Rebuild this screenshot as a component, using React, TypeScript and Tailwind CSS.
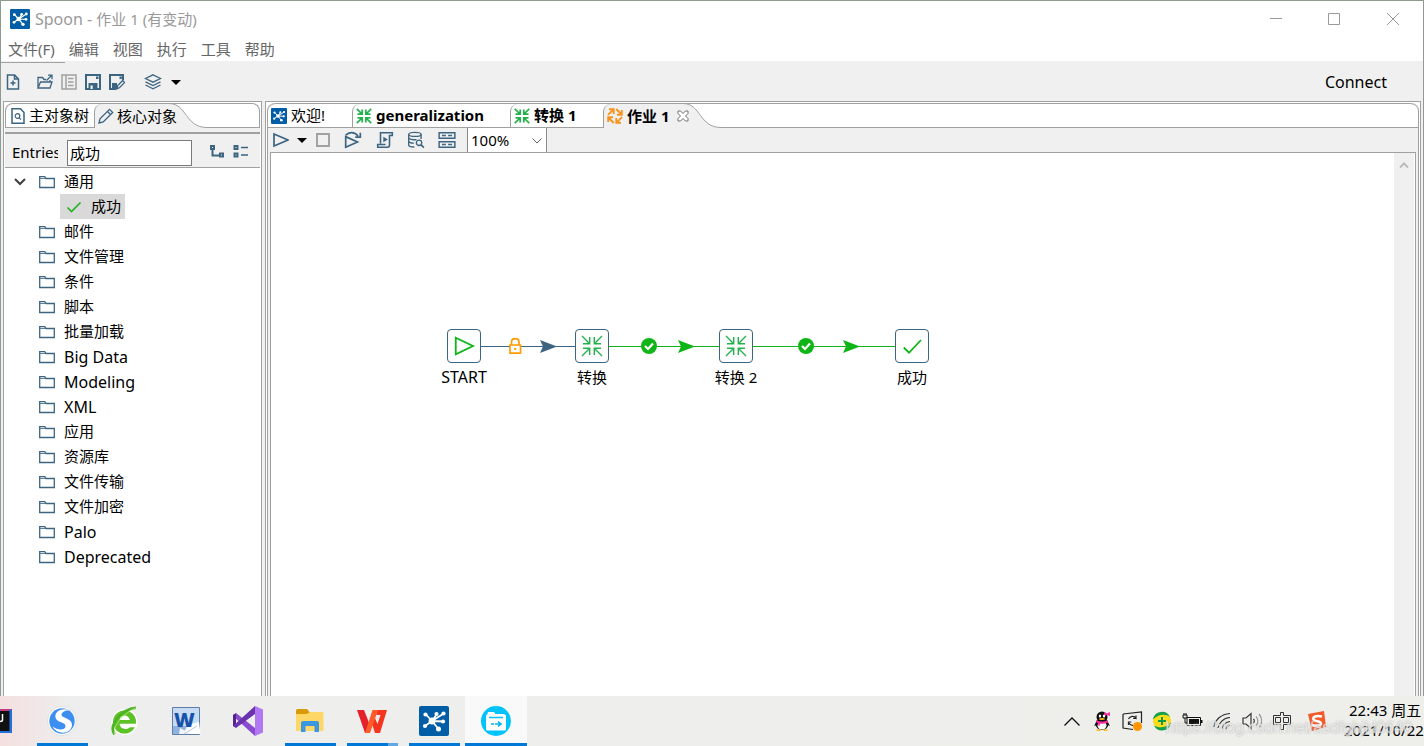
import React, { useState } from "react";
import { clsx } from "clsx";

const BLUE = "#3d6480";
const GREEN = "#0fb516";

type IconProps = { className?: string };

function SpoonLogo({ className }: IconProps) {
  return (
    <svg viewBox="0 0 30 30" className={className}>
      <rect width="30" height="30" rx="2" fill="#005da6" />
      <g stroke="#fff" strokeWidth="1.8">
        <path d="M13 15 6.500 8M13 15 18 8M13 15 24 8M13 15 24 15.500M13 15 6 20M13 15 19.500 23" />
      </g>
      <g fill="#fff">
        <circle cx="13" cy="15" r="3.400" />
        <circle cx="6.500" cy="8.500" r="2.100" />
        <circle cx="17.500" cy="8" r="2.100" />
        <circle cx="24.500" cy="7.500" r="2.100" />
        <circle cx="24" cy="15.500" r="2.100" />
        <circle cx="6" cy="20" r="2.100" />
        <circle cx="19.500" cy="23" r="2.500" />
      </g>
    </svg>
  );
}

function Icon({ children, className = "size-4", color = BLUE }: { children: React.ReactNode; className?: string; color?: string }) {
  return (
    <svg viewBox="0 0 16 16" fill="none" stroke={color} strokeWidth="1.5" className={clsx("shrink-0", className)}>
      {children}
    </svg>
  );
}

const FolderIcon = () => (
  <Icon className="h-4 w-[18px]">
    <path d="M.7 13.500V2.700h5l1.300 1.800h8.300v9z" strokeWidth="1.300" />
    <path d="M1 4.500h6" strokeWidth=".8" />
  </Icon>
);

const TransIcon = () => (
  <Icon color="#23b14d">
    <path
      d="M.8.8L6 6M15.200.8L10 6M.8 15.200L6 10M15.200 15.200L10 10M1.500 6.200h4.700V1.500M14.500 6.200H9.800V1.500M1.500 9.800h4.700v4.700M14.500 9.800H9.800v4.700"
      strokeWidth="1.700"
    />
  </Icon>
);

const JobIcon = () => (
  <Icon color="#f7941e">
    {[0, 90, 180, 270].map((angle) => (
      <path key={angle} d="M1 6.800L6 1.800M2 1.200h4.700V6" strokeWidth="1.900" transform={`rotate(${angle} 8 8)`} />
    ))}
  </Icon>
);

const Caret = () => (
  <svg viewBox="0 0 10 5" className="h-[5px] w-[10px]">
    <path d="M0 0h10L5 5z" />
  </svg>
);

function ToolButton({ label, className = "w-6", children }: { label: string; className?: string; children: React.ReactNode }) {
  return (
    <button type="button" aria-label={label} className={clsx("flex h-6 shrink-0 items-center justify-center", className)}>
      {children}
    </button>
  );
}

/* sloping right edge of the selected tab */
function TabCurve() {
  return (
    <svg viewBox="0 0 38 25" className="-mt-px h-[25px] w-[38px] shrink-0" fill="none">
      <path d="M0 .5C18 .5 16 24.500 38 24.500V25H0z" fill="#f0f0f0" />
      <path d="M0 .5h38" stroke="#a0a0a0" />
      <path d="M0 .5C18 .5 16 24.500 38 24.500" stroke="#a0a0a0" />
    </svg>
  );
}

const menus = ["文件(F)", "编辑", "视图", "执行", "工具", "帮助"];

const folders = [
  "邮件",
  "文件管理",
  "条件",
  "脚本",
  "批量加载",
  "Big Data",
  "Modeling",
  "XML",
  "应用",
  "资源库",
  "文件传输",
  "文件加密",
  "Palo",
  "Deprecated",
];

const isLatin = (text: string) => /^[\w ]+$/.test(text);

function TitleBar() {
  return (
    <header className="flex h-9 shrink-0 items-center pl-[9px] text-[#999]">
      <SpoonLogo className="size-5" />
      <h1 className="ml-[5px] flex-1 text-[15px]">
        <span className="text-base">Spoon - </span>作业 1 (有变动)
      </h1>
      <div className="flex">
        <button type="button" aria-label="最小化" className="flex w-[58px] justify-center">
          <svg viewBox="0 0 12 12" className="size-3" stroke="#999"><path d="M0 5.500h12" /></svg>
        </button>
        <button type="button" aria-label="最大化" className="flex w-[58px] justify-center">
          <svg viewBox="0 0 12 12" className="size-3" stroke="#999" fill="none"><path d="M.5.5h11v11H.5z" /></svg>
        </button>
        <button type="button" aria-label="关闭" className="flex w-[60px] justify-center">
          <svg viewBox="0 0 12 12" className="size-3" stroke="#999"><path d="M0 0l12 12M12 0L0 12" /></svg>
        </button>
      </div>
    </header>
  );
}

function MainToolbar() {
  return (
    <div className="flex h-[38px] shrink-0 items-center bg-[#f0f0f0]">
      <ToolButton label="新建">
        <Icon>
          <path d="M2.500 1h7.200L13.500 5v10h-11zM9.500 1v4h4M8 6.500v5M5.500 9h5" />
        </Icon>
      </ToolButton>
      <ToolButton label="打开" className="ml-2 w-6">
        <Icon>
          <path d="M1 14V3.500h4.500L7 5.500h2M1 14l2.500-6H15l-2 6zM13 8V6M9.500 6.500l5-5M11 1.200h4v4" strokeWidth="1.300" />
        </Icon>
      </ToolButton>
      <ToolButton label="浏览">
        <Icon color="#a0a0a0">
          <path d="M1 1h14v14H1zM5 1v14M7 4.500h5.500M7 8h5.500M7 11.500h5.500" />
        </Icon>
      </ToolButton>
      <ToolButton label="保存">
        <Icon>
          <path d="M1 1h14v14H1z" strokeWidth="2" />
          <path d="M3.500 9h9v6h-9zM11 2.500h2.500V5H11z" fill={BLUE} stroke="none" />
          <path d="M5.500 11.500h2.200V15H5.500z" fill="#f0f0f0" stroke="none" />
        </Icon>
      </ToolButton>
      <ToolButton label="另存为">
        <Icon>
          <path d="M7 15H1V1h13v5" strokeWidth="2" />
          <path d="M3 9h5v6H3zM10.500 2.500h2.300V5h-2.300z" fill={BLUE} stroke="none" />
          <path d="M8 14.800l.7-3.300 5-5 2 2-5 5z" fill="#f0f0f0" strokeWidth="1.300" />
        </Icon>
      </ToolButton>
      <ToolButton label="透视图" className="ml-3 w-6">
        <Icon className="h-4 w-[18px]">
          <path d="M8 .8l7.500 3.700L8 8.200.5 4.500zM.5 7.800L8 11.500l7.500-3.700M.5 11L8 14.800l7.500-3.800" strokeWidth="1.300" />
        </Icon>
      </ToolButton>
      <ToolButton label="选择透视图" className="w-[22px]">
        <Caret />
      </ToolButton>
      <button type="button" className="mr-9 ml-auto text-base">Connect</button>
    </div>
  );
}

function ObjectPanel() {
  const [query, setQuery] = useState("成功");

  return (
    <aside className="flex w-[259px] shrink-0 flex-col border border-b-0 border-[#a0a0a0] bg-white px-px pt-px">
      <div role="tablist" className="flex h-[25px] shrink-0 rounded-t-lg border border-b-0 border-[#a0a0a0]">
        <button type="button" role="tab" className="flex w-[88px] shrink-0 items-center gap-[3px] border-b border-[#a0a0a0] pl-1 text-[15px] whitespace-nowrap">
          <Icon>
            <path d="M2 .8h8.500L14 4.500v10.700H2z" />
            <circle cx="7.500" cy="8" r="2.300" strokeWidth="1.200" />
            <path d="M9.300 9.800l1.700 1.900" strokeWidth="1.200" />
          </Icon>
          主对象树
        </button>
        <button type="button" role="tab" aria-selected="true" className="z-10 flex shrink-0 items-center gap-[3px] rounded-tl-lg border-l border-[#a0a0a0] bg-[#f0f0f0] pl-[3px] text-[15px] whitespace-nowrap">
          <Icon>
            <path d="M1 15l1-4.200L11.500 1.300l3.200 3.200L5.200 14zM9.500 3.500l3 3" strokeWidth="1.300" />
          </Icon>
          <span className="-mr-2">核心对象</span>
        </button>
        <TabCurve />
        <div className="flex-1 border-b border-[#a0a0a0]" />
      </div>
      <div className="h-[6px] shrink-0 border-b-2 border-[#a0a0a0] bg-[#f0f0f0]" />
      <div className="flex h-[34px] shrink-0 items-center border-b border-[#a0a0a0] bg-[#f0f0f0] pt-1 pl-[7px]">
        <label htmlFor="entries" className="w-[46px] overflow-hidden text-[15px]">Entries</label>
        <input
          id="entries"
          value={query}
          onChange={(e) => setQuery(e.target.value)}
          className="ml-[9px] h-[26px] w-[125px] border border-[#7a7a7a] bg-white px-0.5 text-[15px] outline-none"
        />
        <ToolButton label="展开" className="ml-[13px] w-6">
          <Icon>
            <path d="M2 1h3v3H2zM11 8.500h3v3h-3zM3.500 5v5.500H10" strokeWidth="2" />
          </Icon>
        </ToolButton>
        <ToolButton label="收起">
          <Icon className="h-4 w-[18px]">
            <path d="M1.500 1h3v3h-3zM1.500 8.500h3v3h-3z" strokeWidth="2" />
            <path d="M8 2.500h7M8 10h7" />
          </Icon>
        </ToolButton>
      </div>
      <ul role="tree" className="min-h-0 flex-1 overflow-hidden pt-px text-[15px] leading-[25px]">
        <li role="treeitem" aria-expanded="true">
          <div className="flex h-[25px] items-center pl-[9px]">
            <svg viewBox="0 0 12 8" className="mr-3 h-2 w-3" fill="none" stroke="#404040" strokeWidth="2">
              <path d="M1 1l5 5 5-5" />
            </svg>
            <FolderIcon />
            <span className="ml-2">通用</span>
          </div>
          <ul role="group" className="pl-[55px]">
            <li role="treeitem" aria-selected="true" className="flex h-[25px] w-[65px] items-center bg-[#d9d9d9] pl-1.5">
              <Icon color="#23b123"><path d="M1.500 8.500l4 4L14.500 3.500" strokeWidth="1.600" /></Icon>
              <span className="ml-[9px]">成功</span>
            </li>
          </ul>
        </li>
        {folders.map((name) => (
          <li key={name} role="treeitem" className="flex h-[25px] items-center pl-[33px]">
            <FolderIcon />
            <span className={clsx("ml-2", isLatin(name) && "text-base")}>{name}</span>
          </li>
        ))}
      </ul>
    </aside>
  );
}

function EditorTabs() {
  return (
    <div role="tablist" className="flex h-[25px] shrink-0 rounded-t-lg border-t border-[#a0a0a0] bg-white text-[15px] whitespace-nowrap">
      <button type="button" role="tab" className="flex w-[84px] shrink-0 items-center gap-1 border-b border-[#a0a0a0] pl-[3px]">
        <SpoonLogo className="size-4" />
        欢迎!
      </button>
      <button type="button" role="tab" className="flex w-[158px] shrink-0 items-center gap-1 rounded-tl-lg border-b border-l border-[#a0a0a0] pl-[3px] font-bold">
        <TransIcon />
        generalization
      </button>
      <button type="button" role="tab" className="flex w-[93px] shrink-0 items-center gap-1 rounded-tl-lg border-b border-l border-[#a0a0a0] pl-[3px] font-bold">
        <TransIcon />
        转换 1
      </button>
      <button type="button" role="tab" aria-selected="true" className="z-10 flex shrink-0 items-center gap-1 rounded-tl-lg border-l border-[#a0a0a0] bg-[#f0f0f0] pl-[3px] font-bold">
        <JobIcon />
        作业 1
        <svg viewBox="0 0 12 12" className="-mr-1.5 ml-1 size-3 shrink-0" fill="#fff" stroke="#707070">
          <path d="M1 1h2.500L6 3.500 8.500 1H11v2.500L8.500 6 11 8.500V11H8.500L6 8.500 3.500 11H1V8.500L3.500 6 1 3.500z" />
        </svg>
      </button>
      <TabCurve />
      <div className="flex-1 border-b border-[#a0a0a0]" />
    </div>
  );
}

function EditorToolbar() {
  return (
    <div className="flex h-6 shrink-0 items-center bg-[#f0f0f0] pl-px">
      <ToolButton label="运行">
        <Icon><path d="M1 2l14 6-14 6z" strokeWidth="1.700" /></Icon>
      </ToolButton>
      <ToolButton label="运行选项" className="w-[18px]"><Caret /></ToolButton>
      <ToolButton label="停止">
        <Icon color="#a0a0a0"><path d="M2 2h12v12H2z" strokeWidth="1.900" /></Icon>
      </ToolButton>
      <ToolButton label="重放" className="w-9">
        <Icon className="size-[18px]">
          <path d="M1.500 5l10.500 4.800-10.500 4.700zM1.500 3.500C6 .5 10 1.500 12.500 4.500M14.500 1.500v4H10" strokeWidth="1.500" />
        </Icon>
      </ToolButton>
      <ToolButton label="脚本" className="w-7">
        <Icon className="size-[18px]">
          <path d="M4 11V1.500h10.500V4H12v8.500c0 1-.7 2-1.700 2H1.500V12h7" strokeWidth="1.400" />
          <path d="M6.500 5l4 2.500-4 2.500z" fill={BLUE} stroke="none" />
        </Icon>
      </ToolButton>
      <ToolButton label="探索数据库" className="w-[34px]">
        <Icon className="size-[18px]">
          <ellipse cx="7" cy="3" rx="5.500" ry="1.800" strokeWidth="1.200" />
          <path d="M1.500 3v9.500c0 1 2 1.700 5 1.700M12.500 3v4M1.500 6c1 1.500 4 2 7 1.600M1.500 9.300c.8 1 2.500 1.600 4.500 1.600" strokeWidth="1.200" />
          <circle cx="10.700" cy="10.500" r="2.400" strokeWidth="1.200" />
          <path d="M12.500 12.300l2.500 2.500" strokeWidth="1.500" />
        </Icon>
      </ToolButton>
      <ToolButton label="显示结果" className="w-7">
        <Icon className="size-[18px]">
          <path d="M1 1.500h14v5H1zM1 9.500h14v5H1z" strokeWidth="1.300" />
          <path d="M3.500 4H7M9 4h3.500M3.500 12H7M9 12h3.500" strokeWidth="1.400" />
        </Icon>
      </ToolButton>
      <div className="relative ml-1.5 h-6 w-20 border-x border-[#8a8a8a] bg-white">
        <select aria-label="缩放" defaultValue="100%" className="h-full w-full appearance-none pl-[3px] text-[15px] leading-6 outline-none">
          <option>100%</option>
          <option>75%</option>
          <option>50%</option>
        </select>
        <svg viewBox="0 0 10 6" className="pointer-events-none absolute top-[10px] right-1 h-[6px] w-[10px]" fill="none" stroke="#606060">
          <path d="M.5.5L5 5 9.500.5" />
        </svg>
      </div>
    </div>
  );
}

const nodes = [
  { label: "START", x: 193, kind: "start" },
  { label: "转换", x: 321, kind: "trans" },
  { label: "转换 2", x: 465, kind: "trans" },
  { label: "成功", x: 641, kind: "success" },
];

function NodeIcon({ kind }: { kind: string }) {
  if (kind === "start") {
    return <Icon className="size-6" color={GREEN}><path d="M2.500 2.500L14 8 2.500 13.500z" strokeWidth="1.200" /></Icon>;
  }
  if (kind === "success") {
    return <Icon className="size-6" color={GREEN}><path d="M2.500 9l3.500 3.500L14 4" strokeWidth="1.200" /></Icon>;
  }
  return (
    <svg viewBox="0 0 24 24" className="size-6" fill="none" stroke="#23b14d" strokeWidth="1.400">
      <path d="M2 2l7.500 7.500M22 2l-7.500 7.500M2 22l7.500-7.500M22 22l-7.500-7.500M3 9.700h6.700V3M21 9.700h-6.700V3M3 14.300h6.700V21M21 14.300h-6.700V21" />
    </svg>
  );
}

function Hops() {
  return (
    <svg className="absolute top-0 left-0 h-[400px] w-[700px]" fill="none">
      <path d="M210 193.500h94" stroke={BLUE} />
      <path d="M269 187l17 6.500-17 6.500 3-6.500z" fill={BLUE} />
      <path d="M338 193.500h110M482 193.500h142" stroke={GREEN} />
      <path d="M407 187l17 6.500-17 6.500 3-6.500zM572 187l17 6.500-17 6.500 3-6.500z" fill={GREEN} />
      {[378, 535].map((x) => (
        <g key={x}>
          <circle cx={x} cy="193" r="8" fill={GREEN} />
          <path d={`M${x - 4} 193l3 3 5-5.500`} stroke="#fff" strokeWidth="2.200" />
        </g>
      ))}
      <g stroke="#ff9c00" strokeWidth="1.700">
        <path d="M239 192h10.500v8.200H239z" fill="#fff" />
        <path d="M240.500 192v-3c0-4.500 7.500-4.500 7.500 0v3" />
        <path d="M243.200 196h2" strokeWidth="2" />
      </g>
    </svg>
  );
}

function JobCanvas() {
  return (
    <div className="relative min-w-0 flex-1 overflow-hidden bg-white">
      <Hops />
      {nodes.map((n) => (
        <div key={n.label} className="absolute top-[176px] flex w-24 -translate-x-1/2 flex-col items-center" style={{ left: n.x }}>
          <div className="flex size-[34px] items-center justify-center rounded border border-[#3d6480] bg-white">
            <NodeIcon kind={n.kind} />
          </div>
          <span className={clsx("mt-0.5 leading-6 whitespace-nowrap", isLatin(n.label) ? "text-base" : "text-[15px]")}>{n.label}</span>
        </div>
      ))}
    </div>
  );
}

function Editor() {
  return (
    <main className="flex min-w-0 flex-1 flex-col border border-b-0 border-[#a0a0a0] bg-white px-px pt-px">
      <div className="flex min-h-0 flex-1 flex-col rounded-t-lg border-x border-[#a0a0a0]">
        <EditorTabs />
        <EditorToolbar />
        <div className="flex min-h-0 flex-1 bg-[#f0f0f0] px-0.5">
          <div className="flex min-w-0 flex-1 border border-b-0 border-[#a0a0a0] bg-white">
            <JobCanvas />
            <div className="mr-px flex w-5 shrink-0 justify-center bg-[#f0f0f0] pt-2">
              <svg viewBox="0 0 10 8" className="h-2 w-2.5" fill="none" stroke="#bcbcbc" strokeWidth="2">
                <path d="M1 6.500l4-4 4 4" />
              </svg>
            </div>
          </div>
        </div>
      </div>
    </main>
  );
}

const apps = [
  {
    name: "搜狗浏览器",
    state: "running",
    icon: (
      <svg viewBox="0 0 30 30" className="size-[30px]">
        <circle cx="15" cy="15" r="14.500" fill="#fff" stroke="#d0d0d0" strokeWidth=".6" />
        <circle cx="15" cy="15" r="12.700" fill="#3c8ff0" />
        <path d="M23 4.500C14 1 7.500 6 8.500 11.500c1 5.500 10.500 4 10 9C18 25 10 24 5.500 20.500c4.500 9 19 8 19.500-1.500.3-7-10-6.500-10.500-10C14.300 6 18.500 4 23 4.500z" fill="#fff" />
      </svg>
    ),
  },
  {
    name: "360浏览器",
    state: "idle",
    icon: (
      <svg viewBox="0 0 30 30" className="size-[30px]" fill="none">
        <circle cx="15.500" cy="16" r="13" fill="#fff" />
        <circle cx="15.500" cy="16" r="11.500" fill="#5cc228" />
        <path d="M10.500 14c.7-6 9.500-6 10.300 0zM10.500 17.800H28v3.400h-7c-3 3-9.800 2.300-10.500-3.400z" fill="#fff" />
        <path d="M5.500 28.500C-1 19 13 3 27 1.800" stroke="#4db325" strokeWidth="2.600" />
        <path d="M5.500 28.500C4 20 12 9 27 1.800" stroke="#b5e87a" strokeWidth=".8" />
      </svg>
    ),
  },
  {
    name: "Word",
    state: "idle",
    icon: (
      <svg viewBox="0 0 30 30" className="size-[30px]">
        <path d="M1.500 1.500h27v27h-27z" fill="#c7dcf3" stroke="#5d7ea9" />
        <path d="M2 20h26v8H2z" fill="#8fb2df" />
        <path d="M17 19l11-3 1.500 12H12z" fill="#fff" />
        <path d="M9 22l11 6H8z" fill="#f2f6fb" />
        <path d="M13 28l13-8" stroke="#b6c6dc" fill="none" />
        <text x="3" y="21" fontSize="20" fontWeight="900" fill="#1852a8" fontFamily="Noto Sans, sans-serif">W</text>
      </svg>
    ),
  },
  {
    name: "Visual Studio",
    state: "idle",
    icon: (
      <svg viewBox="0 0 30 30" className="size-[30px]">
        <path d="M0 9l3-2 19 15v8L0 10z" fill="#8a4bd0" />
        <path d="M0 9l3-1.500v14L0 20z" fill="#53258b" />
        <path d="M0 20L22 0v8L3 22z" fill="#6c33af" />
        <path d="M22 0l8 3.500v23L22 30z" fill="#b179f1" />
      </svg>
    ),
  },
  {
    name: "文件资源管理器",
    state: "running",
    icon: (
      <svg viewBox="0 0 30 30" className="size-[30px]">
        <path d="M1 5c0-1 .5-2 1.500-2H12l2.500 3H28v7H1z" fill="#d99a09" />
        <path d="M1 8h11l3-2h12c1 0 1.500.5 1.500 1.500V25H1z" fill="#ffd766" />
        <path d="M6 26V17c0-1.200.8-2 2-2h14c1.200 0 2 .8 2 2v9h-4.500v-6h-9v6z" fill="#3b97df" />
      </svg>
    ),
  },
  {
    name: "WPS",
    state: "grouped",
    icon: (
      <svg viewBox="0 0 30 30" className="size-[30px]">
        <path d="M0 4h7l5.500 14L13 27H8z" fill="#e4212b" />
        <path d="M20 4h10l-7 23h-5l-3-9 3-6 2.500 6 3-9h-4z" fill="#f5341f" />
        <path d="M15.500 4H21L13 27H8z" fill="#ff5a27" />
      </svg>
    ),
  },
  { name: "Spoon", state: "running", icon: <SpoonLogo className="size-[30px]" /> },
  {
    name: "文件传输助手",
    state: "active",
    icon: (
      <svg viewBox="0 0 30 30" className="size-[30px]" fill="none">
        <circle cx="15" cy="15" r="15" fill="#00c3fa" />
        <path d="M6.500 11V7.500c0-1 .5-1.500 1.500-1.500h5l1.500 2H22c1 0 1.500.5 1.500 1.500V11" fill="#fff" />
        <rect x="5" y="8.500" width="20" height="16" rx="1.500" fill="#fff" />
        <path d="M8 11.500h14" stroke="#00c3fa" strokeWidth="1.500" />
        <path d="M10 18h3M14 18h5M17 15.500l3 2.500-3 2.500" stroke="#00b5ef" strokeWidth="1.600" />
      </svg>
    ),
  },
];

function Tray() {
  const slot = "flex w-[30px] shrink-0 items-center justify-center";
  return (
    <div className="ml-auto flex h-full">
      <button type="button" aria-label="显示隐藏的图标" className={slot}>
        <svg viewBox="0 0 16 9" className="h-[9px] w-4" fill="none" stroke="#111" strokeWidth="1.300"><path d="M.5 8.500L8 1l7.500 7.500" /></svg>
      </button>
      <span className={slot}>
        <svg viewBox="0 0 18 20" className="h-5 w-[18px]">
          <ellipse cx="9" cy="13" rx="6.500" ry="6" fill="#111" />
          <ellipse cx="9" cy="14.500" rx="4.500" ry="4" fill="#fff" />
          <circle cx="9" cy="6" r="5.500" fill="#111" />
          <path d="M1 15l3-5h10l3 5-3-1.500L13 12H5l-1 2z" fill="#111" />
          <path d="M3.500 9c3 2 8 2 11 0l.5 2.500c-3 1.200-6 1.500-8 1.200L6.500 15 5 14.500l.3-2.300L3 11z" fill="#ff2ba6" />
          <path d="M11 1l3 1.500L17 1v4l-3-1-2.500 1z" fill="#ff2ba6" />
          <ellipse cx="7" cy="5" rx="1.200" ry="1.500" fill="#fff" />
          <ellipse cx="11" cy="5" rx="1.200" ry="1.500" fill="#fff" />
          <ellipse cx="9" cy="8" rx="3" ry="1" fill="#fdb913" />
          <path d="M3 18.500h5l-1 1.500H4zM10 18.500h5l-1 1.500h-3z" fill="#fdb913" />
        </svg>
      </span>
      <span className={slot}>
        <svg viewBox="0 0 21 21" className="size-[21px]" fill="none" stroke="#222" strokeWidth="1.200">
          <path d="M1 3l18.500-2v11M1 3v14l10 1.500" />
          <path d="M6.500 8c1.500-3 5.500-3.500 7.500-1V4.500M14 7.300h-2.800M6.500 14v-3h2.800M7 12c1 2 2.500 2.500 4 2.300" />
          <circle cx="15.500" cy="15.500" r="4.500" fill="#ff9500" stroke="none" />
        </svg>
      </span>
      <span className={slot}>
        <svg viewBox="0 0 20 20" className="size-5">
          <circle cx="10" cy="10" r="9" fill="#ffdc19" />
          <path d="M1 8.500A9 9 0 0 1 18 6c-4-3.500-12-3-17 2.500zM19 11.500A9 9 0 0 1 2 14.500c5 3 12 2.500 17-3z" fill="#12a04c" />
          <path d="M10 6v8M6 10h8" stroke="#0c9a43" strokeWidth="2" />
        </svg>
      </span>
      <span className={slot}>
        <svg viewBox="0 0 21 16" className="h-4 w-[21px]" fill="none" stroke="#111">
          <path d="M5 4.500h13.500v8H5z" />
          <path d="M7 6h10v5H7zM19 7h1.500v3H19z" fill="#111" stroke="none" />
          <path d="M1 2h4v3H1zM2 0v2M4 0v2M3 5v5h2" />
        </svg>
      </span>
      <span className={slot}>
        <svg viewBox="0 0 18 18" className="size-[18px]" fill="none" stroke="#333" strokeWidth="1.200">
          <path d="M1 15C2 8 8 2 17 1.500M5 16C6 11 10 6 17 5.500M9 16.500c1-3.500 4-6.500 8-7M13 17c.5-2 2-3.500 4-4" />
        </svg>
      </span>
      <span className={slot}>
        <svg viewBox="0 0 20 18" className="h-[18px] w-5" fill="none" stroke="#333" strokeWidth="1.200">
          <path d="M1 6h3l5-4.500v15L4 12H1zM11.500 7c1 1 1 3 0 4" />
          <path d="M14 4.500c2.500 2.500 2.500 6.500 0 9M17 2c3.500 4 3.500 10 0 14" stroke="#999" />
        </svg>
      </span>
      <span className={slot}>
        <svg viewBox="0 0 18 18" className="size-[18px]" fill="none" stroke="#333">
          <path d="M7.500.5h3v3h7v9h-7v5h-3v-5h-7v-9h7zM2.500 5.500h5v5h-5zM10.500 5.500h5v5h-5z" />
        </svg>
      </span>
      <span className="flex w-10 shrink-0 items-center justify-center">
        <svg viewBox="0 0 20 20" className="size-5">
          <path d="M1 3l16-3 2 16-14 4z" fill="#f4592b" />
          <path d="M15 5.500C9 4 5.500 6 6.500 8.500s7.500 1 7.500 4c0 2.500-5 3-9 1.500" stroke="#fff" strokeWidth="2.500" fill="none" />
        </svg>
      </span>
      <time className="flex w-[87px] shrink-0 flex-col justify-center overflow-hidden pb-0.5 text-[15px] leading-5 whitespace-nowrap">
        <span className="pl-3">22:43 周五</span>
        <span className="pl-[7px]">2021/10/22</span>
      </time>
    </div>
  );
}

function Taskbar() {
  return (
    <footer className="relative flex h-[50px] shrink-0 overflow-hidden bg-linear-to-r from-[#f3e0df] via-[#eeeeee] via-5% to-[#eeeeea]">
      <div className="flex w-[31px] shrink-0 items-center">
        <svg viewBox="0 0 12 24" className="h-6 w-3">
          <path d="M0 0h12v24H0z" fill="#2470d8" />
          <path d="M0 0h12L0 6z" fill="#c33c85" />
          <path d="M0 2h9.500v20H0z" fill="#111" />
          <path d="M2.500 5v6c0 1-.7 1.500-2.500 1.500" stroke="#fff" strokeWidth="1.500" fill="none" />
        </svg>
      </div>
      {apps.map((app) => (
        <button
          key={app.name}
          type="button"
          aria-label={app.name}
          className={clsx("flex w-[62px] shrink-0 flex-col items-center pt-2.5", app.state === "active" && "bg-[#f9f9f9]")}
        >
          {app.icon}
          {app.state !== "idle" && (
            <span className={clsx("mt-auto flex h-[3px] justify-end bg-[#0078d7]", app.state === "active" ? "w-full" : "w-[51px]")}>
              {app.state === "grouped" && <span className="h-full w-2.5 bg-[#5fa8e4]" />}
            </span>
          )}
        </button>
      ))}
      <Tray />
      <p className="pointer-events-none absolute top-[22px] right-3 font-['Liberation_Sans',sans-serif] text-base leading-5 text-white/60 [text-shadow:0_0_2px_#aaa]">
        https://blog.csdn.net/asdfghjkl0640
      </p>
    </footer>
  );
}

export default function App() {
  return (
    <div className="flex h-screen flex-col overflow-hidden bg-white font-['Noto_Sans','Noto_Sans_CJK_SC',sans-serif] text-black">
      <div className="flex min-h-0 flex-1 flex-col border border-b-0 border-[#8f9b8f]">
        <TitleBar />
        <nav className="flex h-6 shrink-0 items-center gap-[14px] pl-[7px] text-[15px] text-[#666]">
          {menus.map((m) => (
            <button key={m} type="button">{m}</button>
          ))}
        </nav>
        <div className="h-0.5 shrink-0 bg-[#f0f0f0]">
          <div className="h-full w-16 border-b border-[#a0a0a0]" />
        </div>
        <MainToolbar />
        <div className="flex min-h-0 flex-1 gap-[3px] bg-[#f0f0f0] px-0.5">
          <ObjectPanel />
          <Editor />
        </div>
      </div>
      <Taskbar />
    </div>
  );
}
